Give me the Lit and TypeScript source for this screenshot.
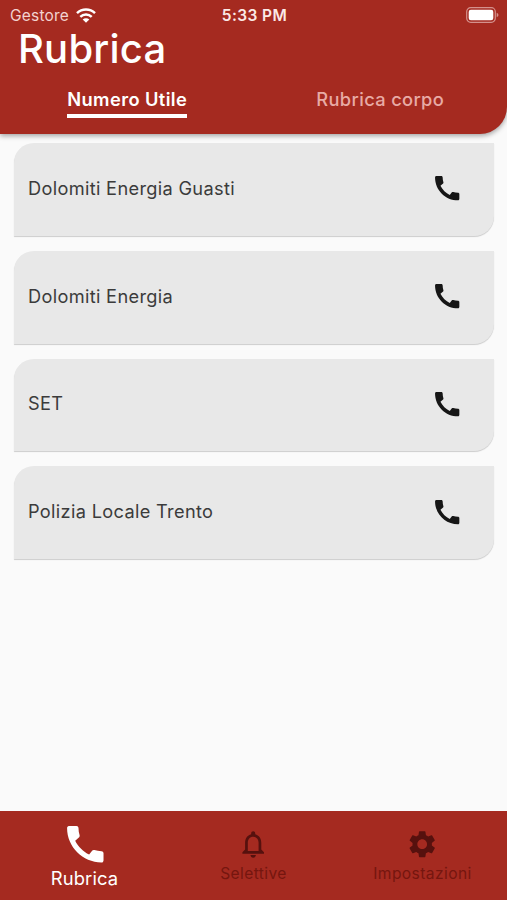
import { LitElement, html, css, svg } from "lit";
import { customElement, property } from "lit/decorators.js";

const PATHS: Record<string, string> = {
  phone:
    "M20.01 15.38c-1.23 0-2.42-.2-3.53-.56-.35-.12-.74-.03-1.01.24l-1.57 1.97c-2.83-1.35-5.48-3.9-6.89-6.83l1.95-1.66c.27-.28.35-.67.24-1.02-.37-1.11-.56-2.3-.56-3.53 0-.54-.45-.99-.99-.99H4.19C3.65 3 3 3.24 3 3.99 3 13.28 10.73 21 20.01 21c.71 0 .99-.63.99-1.18v-3.45c0-.54-.45-.99-.99-.99z",
  bell:
    "M12 22c1.1 0 2-.9 2-2h-4c0 1.1.9 2 2 2zm6-6v-5c0-3.07-1.63-5.64-4.5-6.32V4c0-.83-.67-1.5-1.5-1.5s-1.5.67-1.5 1.5v.68C7.64 5.36 6 7.92 6 11v5l-2 2v1h16v-1l-2-2zm-2 1H8v-6c0-2.48 1.51-4.5 4-4.5s4 2.02 4 4.5v6z",
  gear:
    "M19.14 12.94c.04-.3.06-.61.06-.94 0-.32-.02-.64-.07-.94l2.03-1.58c.18-.14.23-.41.12-.61l-1.92-3.32c-.12-.22-.37-.29-.59-.22l-2.39.96c-.5-.38-1.03-.7-1.62-.94l-.36-2.54c-.04-.24-.24-.41-.48-.41h-3.84c-.24 0-.43.17-.47.41l-.36 2.54c-.59.24-1.13.57-1.62.94l-2.39-.96c-.22-.08-.47 0-.59.22L2.74 8.87c-.12.21-.08.47.12.61l2.03 1.58c-.05.3-.09.63-.09.94s.02.64.07.94l-2.03 1.58c-.18.14-.23.41-.12.61l1.92 3.32c.12.22.37.29.59.22l2.39-.96c.5.38 1.03.7 1.62.94l.36 2.54c.05.24.24.41.48.41h3.84c.24 0 .44-.17.47-.41l.36-2.54c.59-.24 1.13-.56 1.62-.94l2.39.96c.22.08.47 0 .59-.22l1.92-3.32c.12-.22.07-.47-.12-.61l-2.01-1.58zM12 15.6c-1.98 0-3.6-1.62-3.6-3.6s1.62-3.6 3.6-3.6 3.6 1.62 3.6 3.6-1.62 3.6-3.6 3.6z",
};

@customElement("app-icon")
class AppIcon extends LitElement {
  @property() name = "phone";
  static styles = css`
    :host { display: block; width: 32.4px; height: 32.4px; flex: none; }
    svg { display: block; width: 100%; height: 100%; fill: currentColor; }
  `;
  render() {
    return html`<svg viewBox="0 0 24 24">${svg`<path d=${PATHS[this.name]}></path>`}</svg>`;
  }
}

@customElement("contact-card")
class ContactCard extends LitElement {
  @property() label = "";
  static styles = css`
    :host {
      display: flex; align-items: center; justify-content: space-between;
      box-sizing: border-box; height: 92.8px; padding: 0 30px 2px 14px;
      background: #e8e8e8; border-radius: 20px 0 20px 0;
      box-shadow: 0 1px 1px rgba(0, 0, 0, 0.18);
    }
    .label { padding-bottom: 1px; font-size: 18.2px; letter-spacing: 0.33px; color: #3b3b3b; white-space: nowrap; }
    app-icon { color: #161616; }
  `;
  render() {
    return html`<span class="label">${this.label}</span><app-icon name="phone"></app-icon>`;
  }
}

@customElement("app-root")
class AppRoot extends LitElement {
  static styles = css`
    :host {
      display: flex; flex-direction: column; height: 900px; overflow: hidden;
      background: #fafafa; font-family: Inter, "Liberation Sans", sans-serif;
    }
    header {
      position: relative; z-index: 1; flex: none; box-sizing: border-box; height: 134px;
      background: #a52a20; color: #fff; border-radius: 0 0 27px 0;
      box-shadow: 0 2px 5px rgba(0, 0, 0, 0.35);
    }
    .status {
      display: grid; grid-template-columns: 1fr auto 1fr; align-items: center;
      height: 29px; padding: 0 8px 0 10px; font-size: 15.5px; line-height: 29px;
    }
    .carrier { display: flex; align-items: center; gap: 7px; color: #f3d3d0; letter-spacing: 0.2px; }
    .carrier span { padding-top: 1px; }
    .wifi { width: 20px; height: 15px; fill: none; stroke: #fff; stroke-width: 2.5; }
    .wifi .dot { fill: #fff; stroke: none; }
    .time { padding-top: 1px; font-weight: 600; font-size: 15.5px; letter-spacing: 0.4px; color: #fbe9e7; }
    .battery { justify-self: end; width: 33px; height: 16px; }
    h1 {
      margin: 0; padding-left: 18px; height: 40px; line-height: 40px;
      font-size: 40px; font-weight: 500; letter-spacing: 0.2px;
    }
    .tabs { display: grid; grid-template-columns: 1fr 1fr; margin-top: 18px; justify-items: center; }
    .tab {
      height: 27px; line-height: 24px; font-size: 18.3px; font-weight: 500;
      letter-spacing: 0.35px; color: #e8aaa5; border-bottom: 4px solid transparent; white-space: nowrap;
    }
    .tab.active { margin-left: 1px; color: #fff; font-weight: 600; letter-spacing: 0.4px; border-color: #fff; }
    main { flex: 1; display: flex; flex-direction: column; gap: 15px; padding: 9px 13.5px 0 14px; }
    nav {
      flex: none; display: grid; grid-template-columns: repeat(3, 1fr); height: 89px;
      background: #a52a20;
    }
    .item {
      display: flex; flex-direction: column; align-items: center; justify-content: flex-start;
      padding-top: 17px; gap: 4px; font-size: 15.6px; line-height: 20px; letter-spacing: 0.4px; color: #75160f;
    }
    .item app-icon { color: #56110e; }
    .item.active { padding-top: 9px; gap: 0; font-size: 18.4px; line-height: 19px; color: #fff; letter-spacing: 0.1px; }
    .item.active app-icon { width: 48.6px; height: 48.6px; margin-left: 1px; color: #fff; }
  `;
  render() {
    const contacts = ["Dolomiti Energia Guasti", "Dolomiti Energia", "SET", "Polizia Locale Trento"];
    return html`
      <header>
        <div class="status">
          <div class="carrier">
            <span>Gestore</span>
            <svg class="wifi" viewBox="0 0 20 15">
              <path d="M1 5.2a13 13 0 0 1 18 0"></path>
              <path d="M4.3 8.8a8.2 8.2 0 0 1 11.4 0"></path>
              <path class="dot" d="M10 14.8 6.7 11.5a4.7 4.7 0 0 1 6.6 0z"></path>
            </svg>
          </div>
          <div class="time">5:33 PM</div>
          <svg class="battery" viewBox="0 0 33 16">
            <rect x="0.7" y="0.7" width="28.6" height="14.6" rx="4" fill="none" stroke="#d4918c" stroke-width="1.2"></rect>
            <rect x="2.7" y="2.7" width="24.6" height="10.6" rx="2.2" fill="#fff"></rect>
            <path d="M30.7 5.8q1.8.9 1.8 2.2t-1.8 2.2z" fill="#d4918c"></path>
          </svg>
        </div>
        <h1>Rubrica</h1>
        <div class="tabs">
          <div class="tab active">Numero Utile</div>
          <div class="tab">Rubrica corpo</div>
        </div>
      </header>
      <main>${contacts.map((c) => html`<contact-card .label=${c}></contact-card>`)}</main>
      <nav>
        <div class="item active"><app-icon name="phone"></app-icon><span>Rubrica</span></div>
        <div class="item"><app-icon name="bell"></app-icon><span>Selettive</span></div>
        <div class="item"><app-icon name="gear"></app-icon><span>Impostazioni</span></div>
      </nav>
    `;
  }
}
